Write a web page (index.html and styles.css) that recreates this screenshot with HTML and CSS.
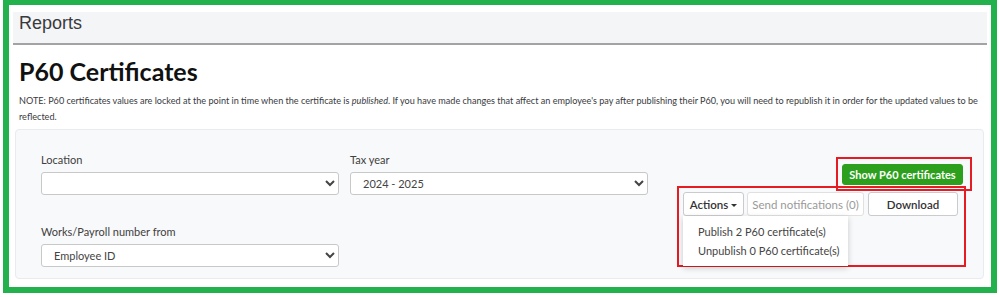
FILE: index.html
```html
<!DOCTYPE html>
<html lang="en">
<head>
    <meta charset="UTF-8">
    <meta name="viewport" content="width=device-width, initial-scale=1.0">
    <title>Reports - P60 Certificates</title>
    <link rel="stylesheet" href="styles.css">
</head>
<body>
    <div class="frame">
        <div class="page-header">Reports</div>

        <div class="intro">
            <h1>P60 Certificates</h1>
            <p class="note">NOTE: P60 certificates values are locked at the point in time when the certificate is <em>published</em>. If you have made changes that affect an employee's pay after publishing their P60, you will need to republish it in order for the updated values to be reflected.</p>
        </div>

        <div class="panel">
            <div class="filters">
                <div class="field">
                    <label for="location">Location</label>
                    <select id="location" class="select-field">
                        <option></option>
                    </select>
                </div>
                <div class="field">
                    <label for="taxYear">Tax year</label>
                    <select id="taxYear" class="select-field">
                        <option>2024 - 2025</option>
                    </select>
                </div>
                <div class="field">
                    <label for="worksNumber">Works/Payroll number from</label>
                    <select id="worksNumber" class="select-field">
                        <option>Employee ID</option>
                    </select>
                </div>
            </div>

            <div class="side">
                <button class="button button-green">Show P60 certificates</button>
                <div class="action-row">
                    <div class="dropdown">
                        <button class="button button-plain button-actions">Actions <span class="caret"></span></button>
                        <ul class="menu">
                            <li>Publish 2 P60 certificate(s)</li>
                            <li>Unpublish 0 P60 certificate(s)</li>
                        </ul>
                    </div>
                    <button class="button button-plain button-send" disabled>Send notifications (0)</button>
                    <button class="button button-plain button-wide">Download</button>
                </div>
            </div>

            <div class="mark mark-show"></div>
            <div class="mark mark-actions"></div>
        </div>
    </div>
</body>
</html>
```

FILE: styles.css
```css
body {
    margin: 0;
    background: #ffffff;
    font-family: Lato, "Open Sans", sans-serif;
    color: #333;
}
.frame {
    margin-left: 3px;
    width: 982px;
    height: 282px;
    border: 6px solid #22b14c;
    border-top-width: 5px;
    background: #ffffff;
    overflow: hidden;
}
.page-header {
    margin: 7px 4px 0;
    height: 31px;
    padding-left: 6px;
    background: #f4f5f7;
    border-bottom: 2px solid #a3a3a3;
    font-family: "Liberation Sans", Arial, sans-serif;
    font-size: 18px;
    line-height: 23px;
    color: #393a3d;
}
.intro {
    padding: 0 3px 0 10px;
}
h1 {
    margin: 11px 0 0;
    font-size: 25px;
    line-height: 31px;
    font-weight: 700;
    color: #111;
}
.note {
    margin: 6px 0 0;
    font-size: 9.1px;
    line-height: 16px;
    color: #393a3d;
}
.panel {
    position: relative;
    display: flex;
    margin: 4px 7px 0 6px;
    height: 150px;
    box-sizing: border-box;
    padding: 22px 20px 0 25px;
    background: #f8f9fa;
    border: 1px solid #e9ebee;
    border-radius: 4px;
}
.filters {
    display: grid;
    grid-template-columns: 298px 298px;
    column-gap: 11px;
    row-gap: 29px;
    align-content: start;
}
.field label {
    display: block;
    font-size: 11px;
    line-height: 15px;
    color: #404040;
    margin-bottom: 5px;
}
.select-field {
    display: block;
    width: 100%;
    height: 23px;
    padding: 0 8px;
    border: 1px solid #c8c8c8;
    border-radius: 3px;
    background: #fff;
    font-family: inherit;
    font-size: 11px;
    color: #444;
}
.side {
    margin-left: auto;
    display: flex;
    flex-direction: column;
    align-items: flex-end;
}
.button {
    height: 24px;
    padding: 0;
    border: 1px solid #c9cbcf;
    border-radius: 3px;
    background: #fff;
    font-family: inherit;
    font-size: 11.5px;
    color: #333;
}
.button-green {
    margin-top: 12px;
    height: 21px;
    width: 121px;
    background: #2ca01c;
    border-color: #2ca01c;
    color: #fff;
    font-weight: 700;
    font-size: 11px;
}
.action-row {
    display: flex;
    gap: 3px;
    margin-top: 7px;
    margin-right: 5px;
}
.button-plain {
    font-weight: 600;
}
.button-actions {
    width: 61px;
}
.button-send {
    width: 117px;
}
.button-plain:disabled {
    color: #9a9a9a;
    font-weight: 400;
    font-size: 11.5px;
    border-color: #e0e0e0;
}
.button-wide {
    width: 90px;
    margin-left: 1px;
}
.caret {
    display: inline-block;
    border-left: 3px solid transparent;
    border-right: 3px solid transparent;
    border-top: 3px solid #333;
    vertical-align: middle;
}
.dropdown {
    position: relative;
}
.menu {
    position: absolute;
    left: 0;
    top: 24px;
    width: 165px;
    margin: 0;
    padding: 6px 0;
    list-style: none;
    background: #fff;
    box-shadow: 0 2px 6px rgba(0, 0, 0, 0.2);
    font-size: 11px;
    line-height: 19px;
    color: #444;
    z-index: 2;
}
.menu li {
    padding-left: 15px;
}
.mark {
    position: absolute;
    border: 2px solid #e51c23;
    pointer-events: none;
}
.mark-show {
    left: 820px;
    top: 27px;
    width: 132px;
    height: 30px;
}
.mark-actions {
    left: 661px;
    top: 56px;
    width: 285px;
    height: 77px;
}
```
